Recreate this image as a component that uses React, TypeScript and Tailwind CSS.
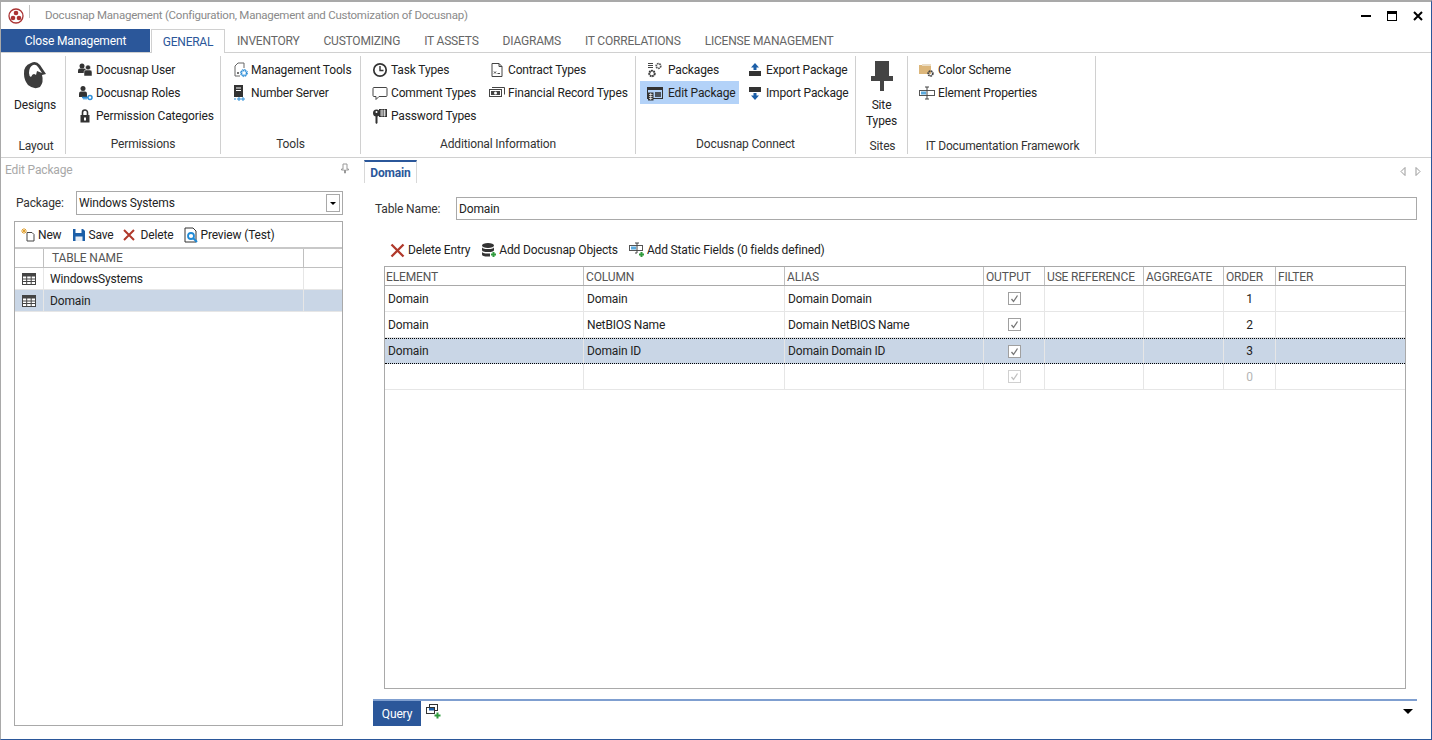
import type { ReactNode } from 'react';

const font = 'font-["Roboto","Liberation_Sans",sans-serif]';

function Ico({ children, size = 16, className = '' }: { children: ReactNode; size?: number; className?: string }) {
  return (
    <svg width={size} height={size} viewBox="0 0 16 16" className={`shrink-0 ${className}`}>
      {children}
    </svg>
  );
}

function FieldIcon() {
  return (
    <Ico>
      <rect x=".5" y="5.5" width="15" height="5" fill="#fff" stroke="#555" />
      <rect x="2" y="6.5" width="5" height="3" fill="#5aa9dd" />
      <path d="M8 2v12M6 2h4M6 14h4" stroke="#444" strokeWidth="1" />
    </Ico>
  );
}

const icons: Record<string, ReactNode> = {
  user: (
    <Ico>
      <circle cx="5" cy="4" r="2.5" fill="#333" />
      <path d="M1 11V8.500q0-2 2-2h4q2 0 2 2V11z" fill="#333" />
      <circle cx="11" cy="5.500" r="2.500" fill="#333" stroke="#fff" strokeWidth=".5" />
      <path d="M7 14v-4q0-2 2-2h4q2 0 2 2v4z" fill="#333" stroke="#fff" strokeWidth=".5" />
    </Ico>
  ),
  roles: (
    <Ico>
      <circle cx="6" cy="3.5" r="2.5" fill="#333" />
      <path d="M2 12V8.500q0-2 2-2h4q2 0 2 2V12z" fill="#333" />
      <circle cx="13" cy="12.500" r="2" fill="none" stroke="#2f8fd8" strokeWidth="1.500" />
      <path d="M11 12.500H5M7 12.500v2M9 12.500v2" stroke="#2f8fd8" strokeWidth="1.300" />
    </Ico>
  ),
  lock: (
    <Ico>
      <path d="M5.500 7V4.500a2.500 2.500 0 0 1 5 0V7" fill="none" stroke="#333" strokeWidth="1.600" />
      <rect x="3.500" y="7" width="9" height="7.500" fill="#333" />
      <rect x="7" y="9.500" width="2" height="3" fill="#fff" />
    </Ico>
  ),
  tools: (
    <Ico>
      <path d="M3 14V4l3-3h6v5M3 14h5" fill="none" stroke="#666" strokeWidth="1" />
      <circle cx="6" cy="11" r="1" fill="#444" />
      <circle cx="12" cy="11" r="2.600" fill="none" stroke="#2f8fd8" strokeWidth="1.600" strokeDasharray="1.600 .5" />
      <circle cx="12" cy="11" r="3.600" fill="none" stroke="#2f8fd8" strokeWidth="1" strokeDasharray="1.400 1.400" />
    </Ico>
  ),
  server: (
    <Ico>
      <rect x="2" y="0" width="9" height="12" fill="#333" />
      <path d="M4 3h5M4 5.500h5" stroke="#fff" strokeWidth="1" />
      <path d="M3 13v2M6 13h2v2H6zM10 13h2v2h-2z" fill="none" stroke="#2f8fd8" strokeWidth="1" />
    </Ico>
  ),
  clock: (
    <Ico>
      <circle cx="8" cy="8" r="6.200" fill="none" stroke="#333" strokeWidth="1.700" />
      <path d="M8 4v4.500h3.500" fill="none" stroke="#333" strokeWidth="1.400" />
    </Ico>
  ),
  comment: (
    <Ico>
      <path d="M2 2.500h12q1 0 1 1v7q0 1-1 1H7l-3 3v-3H2q-1 0-1-1v-7q0-1 1-1z" fill="#fff" stroke="#444" strokeWidth="1" />
    </Ico>
  ),
  password: (
    <Ico>
      <circle cx="4.500" cy="5" r="3.500" fill="#333" />
      <circle cx="4.500" cy="4" r="1" fill="#fff" />
      <path d="M3.500 8h2v7l-1 1-1-1z" fill="#333" />
      <rect x="7" y="1" width="8" height="8" fill="#333" />
      <path d="M8 3h6M8 5h6M8 7h6M10 1.500v7M12.500 1.500v7" stroke="#fff" strokeWidth=".7" />
    </Ico>
  ),
  contract: (
    <Ico>
      <path d="M3 1.500h7l3 3v10H3z" fill="#fff" stroke="#444" strokeWidth="1" />
      <path d="M10 1.500v3h3" fill="none" stroke="#444" strokeWidth="1" />
      <path d="M5 9.500l2 2M7 9.500l-2 2M8.500 11.500h2.500" stroke="#333" strokeWidth=".9" />
    </Ico>
  ),
  money: (
    <Ico>
      <rect x=".5" y="4.500" width="12" height="7" fill="#fff" stroke="#444" />
      <path d="M3 2.500h12.500v7" fill="none" stroke="#444" />
      <rect x="2" y="6" width="9" height="4" fill="#444" />
      <circle cx="6.500" cy="8" r="1.500" fill="#fff" />
    </Ico>
  ),
  packages: (
    <Ico>
      <path d="M1 1.500h5M1 3.500h5M1 5.500h5" stroke="#444" strokeWidth="1" />
      <circle cx="11.500" cy="4" r="2.300" fill="none" stroke="#555" strokeWidth="1.700" strokeDasharray="1.500 .6" />
      <circle cx="5" cy="11.500" r="2.700" fill="none" stroke="#333" strokeWidth="2" strokeDasharray="1.700 .6" />
    </Ico>
  ),
  edit: (
    <Ico>
      <rect x=".5" y="2.500" width="15" height="11" fill="none" stroke="#333" />
      <rect x=".5" y="2.500" width="15" height="2.500" fill="#333" />
      <rect x="8" y="7" width="6" height="5" fill="#333" opacity=".8" />
      <rect x="1" y="7.500" width="5.500" height="8" fill="#333" />
      <path d="M2 9.500h3.500M2 11.500h3.500M2 13.500h3.500M3.700 8v7" stroke="#fff" strokeWidth=".7" />
    </Ico>
  ),
  export: (
    <Ico>
      <path d="M8 1l4 4.500H9.500V8h-3V5.500H4z" fill="#1c5fa8" />
      <rect x="2" y="9" width="12" height="5" fill="#333" />
    </Ico>
  ),
  import: (
    <Ico>
      <rect x="2" y="2" width="12" height="5" fill="#333" />
      <path d="M8 15l4-4.500H9.500V8h-3v2.500H4z" fill="#1c5fa8" />
    </Ico>
  ),
  color: (
    <Ico>
      <path d="M0 3h5l1 1h6v8H0z" fill="#dcb67a" />
      <path d="M3 2h9v2H3z" fill="#eadcc4" />
      <circle cx="11.500" cy="11.500" r="2.300" fill="none" stroke="#444" strokeWidth="1.800" strokeDasharray="1.500 .5" />
    </Ico>
  ),
  element: <FieldIcon />,
};

function RibbonItem({ icon, label, active, wide }: { icon: string; label: string; active?: boolean; wide?: boolean }) {
  return (
    <div className={`flex h-[23px] items-center pl-[7px] ${active ? 'bg-[#b3d2f8]' : ''}`}>
      <span className={`flex w-4 justify-center ${wide ? 'mr-[5px]' : 'mr-[3px]'}`}>{icons[icon]}</span>
      <span className="whitespace-nowrap">{label}</span>
    </div>
  );
}

function ItemCol({ items, className = '' }: { items: [string, string][]; className?: string }) {
  return (
    <div className={`flex flex-col ${className}`}>
      {items.map(([i, l]) => (
        <RibbonItem key={l} icon={i} label={l} />
      ))}
    </div>
  );
}

function Group({ label, width, children, lower }: { label: string; width: string; children: ReactNode; lower?: boolean }) {
  return (
    <div className={`flex h-[98px] shrink-0 flex-col border-r border-[#d0d0d0] ${width}`}>
      <div className="flex flex-1 pt-[2px]">{children}</div>
      <div className={`text-center text-[#333] ${lower ? 'pl-[2px]' : 'pb-[2px]'}`}>{label}</div>
    </div>
  );
}

function Check({ faded }: { faded?: boolean }) {
  return (
    <span className={`flex h-[13px] w-[13px] items-center justify-center border bg-white ${faded ? 'border-[#d0d0d0]' : 'border-[#a0a0a0]'}`}>
      <svg width="9" height="9" viewBox="0 0 9 9">
        <path d="M1.500 5l2 2.500 4-6" fill="none" stroke={faded ? '#c0c0c0' : '#777'} strokeWidth="1.300" />
      </svg>
    </span>
  );
}

function TableIcon() {
  return (
    <svg width="14" height="12" viewBox="0 0 14 12">
      <rect x=".5" y=".5" width="13" height="11" fill="#fff" stroke="#444" />
      <rect x=".5" y=".5" width="13" height="3" fill="#444" />
      <path d="M1 6h12M1 8.500h12M4.700 3v8M9.200 3v8" stroke="#444" strokeWidth="1" />
    </svg>
  );
}

const tabs = ['INVENTORY', 'CUSTOMIZING', 'IT ASSETS', 'DIAGRAMS', 'IT CORRELATIONS', 'LICENSE MANAGEMENT'];
const gridCols = 'grid-cols-[199px_201px_199px_61px_99px_80px_52px_1fr]';
const gridHead = ['ELEMENT', 'COLUMN', 'ALIAS', 'OUTPUT', 'USE REFERENCE', 'AGGREGATE', 'ORDER', 'FILTER'];
const gridRows = [
  { el: 'Domain', col: 'Domain', alias: 'Domain Domain', order: '1' },
  { el: 'Domain', col: 'NetBIOS Name', alias: 'Domain NetBIOS Name', order: '2' },
  { el: 'Domain', col: 'Domain ID', alias: 'Domain Domain ID', order: '3', sel: true },
  { el: '', col: '', alias: '', order: '0', faded: true },
];

export default function App() {
  return (
    <div className={`flex h-[740px] w-[1432px] flex-col overflow-hidden border-t-2 border-r border-b border-l border-t-[#a9a9a9] border-r-[#2b579a] border-b-[#2b579a] border-l-[#a9a9a9] bg-white text-xs tracking-[-0.15px] text-[#222] ${font}`}>
      {/* title bar */}
      <div className="flex h-[27px] shrink-0 items-center">
        <svg width="16" height="16" viewBox="0 0 16 16" className="ml-[7px]">
          <circle cx="8" cy="8" r="7" fill="#fff" stroke="#a33" strokeWidth="1.300" />
          <circle cx="8" cy="5" r="2.300" fill="#a33" />
          <circle cx="5" cy="10" r="2.300" fill="#a33" />
          <circle cx="11" cy="10" r="2.300" fill="#a33" />
        </svg>
        <div className="mb-2 ml-[5px] h-[13px] w-px bg-[#c4c4c4]" />
        <span className="ml-[15px] text-[11.5px] tracking-[-0.25px] text-[#8a8a8a]">Docusnap Management (Configuration, Management and Customization of Docusnap)</span>
        <div className="ml-auto flex items-center gap-4 pr-2">
          <div className="h-[2px] w-[10px] bg-black" />
          <div className="h-[10px] w-[10px] border border-t-[3px] border-black" />
          <svg width="10" height="10" viewBox="0 0 10 10">
            <path d="M1 1l8 8M9 1l-8 8" stroke="#000" strokeWidth="2" />
          </svg>
        </div>
      </div>

      {/* ribbon tabs */}
      <div className="flex h-[24px] shrink-0 items-stretch border-b border-[#d0d0d0]">
        <div className="flex w-[149px] items-center justify-center bg-[#2b579a] pt-px text-white">Close Management</div>
        <div className="relative ml-[1px] flex h-[24px] w-[74px] items-center justify-center border-x border-t border-[#d0d0d0] bg-white pt-px tracking-[-0.25px] text-[#2b579a]">GENERAL</div>
        <div className="flex gap-[24px] pl-[12px] pt-px tracking-[-0.2px] text-[#666]">
          {tabs.map((t) => (
            <span key={t} className="flex items-center whitespace-nowrap">{t}</span>
          ))}
        </div>
      </div>

      {/* ribbon */}
      <div className="flex h-[105px] shrink-0 items-start border-b border-[#d0d0d0] pt-[3px]">
        <Group label="Layout" width="w-[65px] pl-1" lower>
          <div className="flex w-full flex-col items-center pt-[2px]">
            <svg width="32" height="32" viewBox="0 0 32 32">
              <path d="M5 14Q4 6 12 3q5-3 9 2l6 9-4 1q2 7-2 12-6 3-12-2-4-5-4-11z" fill="#3c3c3c" />
              <path d="M10 13q0-6 4-8 3-1 5 2l4 6-5-2-1 4q-3-3-5 2-2-1-2-4z" fill="#fff" />
            </svg>
            <span className="mt-[5px] text-[#222]">Designs</span>
          </div>
        </Group>
        <Group label="Permissions" width="w-[155px]">
          <ItemCol className="pl-1" items={[['user', 'Docusnap User'], ['roles', 'Docusnap Roles'], ['lock', 'Permission Categories']]} />
        </Group>
        <Group label="Tools" width="w-[140px]">
          <ItemCol className="pl-1" items={[['tools', 'Management Tools'], ['server', 'Number Server']]} />
        </Group>
        <Group label="Additional Information" width="w-[275px]">
          <ItemCol className="w-[121px] pl-1" items={[['clock', 'Task Types'], ['comment', 'Comment Types'], ['password', 'Password Types']]} />
          <ItemCol items={[['contract', 'Contract Types'], ['money', 'Financial Record Types']]} />
        </Group>
        <Group label="Docusnap Connect" width="w-[220px]">
          <div className="flex w-[103px] flex-col pl-1">
            <RibbonItem icon="packages" label="Packages" wide />
            <RibbonItem icon="edit" label="Edit Package" active wide />
          </div>
          <ItemCol className="pl-px" items={[['export', 'Export Package'], ['import', 'Import Package']]} />
        </Group>
        <Group label="Sites" width="w-[52px]" lower>
          <div className="flex w-full flex-col items-center pt-[3px] leading-4">
            <svg width="22" height="30" viewBox="0 0 22 30">
              <path d="M4 0h14v15h4v5h-9v10H9V20H0v-5h4z" fill="#444" />
            </svg>
            <span className="mt-[6px]">Site</span>
            <span>Types</span>
          </div>
        </Group>
        <Group label="IT Documentation Framework" width="w-[188px]" lower>
          <ItemCol className="pl-1" items={[['color', 'Color Scheme'], ['element', 'Element Properties']]} />
        </Group>
      </div>

      {/* body */}
      <div className="flex min-h-0 flex-1">
        {/* left dock panel */}
        <div className="flex w-[359px] shrink-0 flex-col pl-[13px] pr-[17px]">
          <div className="relative -ml-[9px] flex h-[23px] items-center text-[#a8a8a8]">
            <span>Edit Package</span>
            <svg width="10" height="11" viewBox="0 0 10 11" className="absolute right-[-7px] top-[5px]">
              <path d="M3 1h4v5h1.500v1h-3v3h-1V7h-3V6H3z" fill="none" stroke="#999" strokeWidth="1" />
            </svg>
          </div>
          <div className="mt-[10px] flex h-[24px] items-center">
            <span className="ml-[2px] w-[60px] text-[#333]">Package:</span>
            <div className="flex h-[24px] flex-1 items-center border border-[#a9a9a9] pl-[2px]">
              <span>Windows Systems</span>
              <span className="ml-auto mr-[2px] flex h-[18px] w-[14px] items-center justify-center border border-[#a9a9a9]">
                <span className="h-0 w-0 border-x-[3px] border-t-[3px] border-x-transparent border-t-black" />
              </span>
            </div>
          </div>
          <div className="mt-[6px] flex h-[505px] flex-col border border-[#a9a9a9]">
            <div className="flex h-[27px] shrink-0 items-center border-b-2 border-[#c8c8c8] pl-[5px]">
              <svg width="16" height="16" viewBox="0 0 16 16">
                <path d="M7 5.500h5l2 2v6.500H7z" fill="#fff" stroke="#444" />
                <path d="M4 1v6M1 4h6M2 2l4 4M6 2L2 6" stroke="#e0a030" strokeWidth="1" />
              </svg>
              <span className="ml-[2px]">New</span>
              <svg width="14" height="14" viewBox="0 0 14 14" className="ml-[10px]">
                <path d="M1 1h10l2 2v10H1z" fill="#1c5fa8" />
                <rect x="3.500" y="1" width="6" height="4" fill="#fff" />
                <rect x="3.500" y="8.500" width="7" height="4.500" fill="#e8eef6" />
              </svg>
              <span className="ml-[3px]">Save</span>
              <svg width="12" height="12" viewBox="0 0 12 12" className="ml-[9px]">
                <path d="M1 1l10 10M11 1L1 11" stroke="#b0392b" strokeWidth="2" />
              </svg>
              <span className="ml-[6px]">Delete</span>
              <svg width="15" height="16" viewBox="0 0 15 16" className="ml-[10px]">
                <path d="M1 1h8l3 3v11H1z" fill="#fff" stroke="#333" />
                <circle cx="7" cy="9" r="3" fill="#fff" stroke="#1f8ad6" strokeWidth="1.800" />
                <path d="M9 11l4 4" stroke="#1f8ad6" strokeWidth="2" />
              </svg>
              <span className="ml-[2px]">Preview (Test)</span>
            </div>
            <div className="grid h-[19px] shrink-0 grid-cols-[29px_260px_1fr] border-b border-[#c0c0c0] text-[#555]">
              <div className="border-r border-[#c0c0c0]" />
              <div className="flex items-center border-r border-[#c0c0c0] pl-2">TABLE NAME</div>
              <div />
            </div>
            {['WindowsSystems', 'Domain'].map((name, i) => (
              <div key={name} className={`grid h-[22px] shrink-0 grid-cols-[29px_260px_1fr] border-b border-[#e6e6e6] ${i === 1 ? 'bg-[#c9d6e6]' : ''}`}>
                <div className="flex items-center justify-center border-r border-[#e6e6e6]">
                  <TableIcon />
                </div>
                <div className="flex items-center border-r border-[#e6e6e6] pl-[6px]">{name}</div>
                <div />
              </div>
            ))}
          </div>
        </div>

        {/* right document area */}
        <div className="flex min-w-0 flex-1 flex-col pr-[14px]">
          <div className="flex h-[25px] shrink-0 items-end pl-1 pt-[2px]">
            <div className="flex h-[23px] w-[53px] items-center justify-center border-x border-t-2 border-x-[#d8d8d8] border-t-[#2b579a] font-bold text-[#2b579a]">Domain</div>
            <div className="-mr-1 ml-auto flex items-center gap-[9px] self-center">
              <svg width="6" height="9" viewBox="0 0 6 9"><path d="M5 .5v8L1 4.500z" fill="none" stroke="#999" /></svg>
              <svg width="6" height="9" viewBox="0 0 6 9"><path d="M1 .5v8l4-4z" fill="none" stroke="#999" /></svg>
            </div>
          </div>
          <div className="mt-[14px] flex h-[23px] shrink-0 items-center pl-[15px]">
            <span className="w-[81px] text-[#333]">Table Name:</span>
            <div className="flex h-[23px] flex-1 items-center border border-[#a9a9a9] pl-[2px]">Domain</div>
          </div>
          <div className="mt-[19px] flex h-[22px] shrink-0 items-center pl-[30px]">
            <svg width="15" height="15" viewBox="0 0 15 15">
              <path d="M1.500 1.500l12 12M13.500 1.500l-12 12" stroke="#b0392b" strokeWidth="2.300" />
            </svg>
            <span className="ml-[3px]">Delete Entry</span>
            <svg width="16" height="16" viewBox="0 0 16 16" className="ml-[11px]">
              <ellipse cx="7" cy="3.500" rx="6" ry="2.500" fill="#333" />
              <path d="M1 5v3q0 2 6 2t6-2V5q0 2-6 2T1 5zM1 9.500v3q0 2 6 2l2 0v-3h-2q-6 0-6-2z" fill="#333" />
              <path d="M10 12.500h5M12.500 10v5" stroke="#2f9a3c" strokeWidth="2" />
            </svg>
            <span className="ml-[2px]">Add Docusnap Objects</span>
            <svg width="16" height="16" viewBox="0 0 16 16" className="ml-[11px]">
              <rect x=".5" y="3.500" width="13" height="5" fill="#fff" stroke="#555" />
              <rect x="2" y="4.500" width="5" height="3" fill="#5aa9dd" />
              <path d="M8 1v10M6 1h4M6 11h2" stroke="#444" />
              <path d="M10 12.500h5M12.500 10v5" stroke="#2f9a3c" strokeWidth="2" />
            </svg>
            <span className="ml-[2px]">Add Static Fields (0 fields defined)</span>
          </div>
          {/* grid */}
          <div className="ml-6 mr-[11px] mt-[5px] flex h-[423px] shrink-0 flex-col border border-[#a9a9a9]">
            <div className={`grid h-[19px] shrink-0 ${gridCols} border-b border-[#a9a9a9] text-[#555]`}>
              {gridHead.map((h, i) => (
                <div key={h} className={`flex items-center whitespace-nowrap pt-px ${i === 0 ? 'pl-px' : 'pl-[2px]'} ${i < 7 ? 'border-r border-[#c0c0c0]' : ''}`}>{h}</div>
              ))}
            </div>
            {gridRows.map((r) => (
              <div key={r.order} className={`grid h-[26px] shrink-0 ${gridCols} ${r.sel ? 'border-y border-dotted border-black bg-[#c9d6e6]' : 'border-b border-[#e6e6e6]'}`}>
                <div className="flex items-center border-r border-[#e6e6e6] pl-[3px]">{r.el}</div>
                <div className="flex items-center border-r border-[#e6e6e6] pl-[3px]">{r.col}</div>
                <div className="flex items-center border-r border-[#e6e6e6] pl-[3px]">{r.alias}</div>
                <div className="flex items-center justify-center border-r border-[#e6e6e6]">
                  <Check faded={r.faded} />
                </div>
                <div className="border-r border-[#e6e6e6]" />
                <div className="border-r border-[#e6e6e6]" />
                <div className={`flex items-center justify-center border-r border-[#e6e6e6] ${r.faded ? 'text-[#b5b5b5]' : ''}`}>{r.order}</div>
                <div />
              </div>
            ))}
          </div>
          {/* bottom tabs */}
          <div className="ml-[13px] mt-[10px] flex h-[27px] shrink-0 items-stretch border-t-2 border-[#7f9fd0]">
            <div className="flex w-[48px] items-center justify-center bg-[#2b579a] text-white">Query</div>
            <svg width="16" height="16" viewBox="0 0 16 16" className="ml-[4px] mt-[2px]">
              <rect x="4.500" y="1.500" width="8" height="6" fill="#fff" stroke="#333" />
              <rect x="1.500" y="4.500" width="8" height="6" fill="#fff" stroke="#333" />
              <rect x="4" y="5" width="5" height="2.500" fill="#1c5fa8" />
              <path d="M9.500 12.500h6M12.500 9.500v6" stroke="#2f9a3c" strokeWidth="2" />
            </svg>
            <span className="ml-auto mr-1 mt-[8px] h-0 w-0 border-x-[5px] border-t-[5px] border-x-transparent border-t-black" />
          </div>
        </div>
      </div>
    </div>
  );
}
